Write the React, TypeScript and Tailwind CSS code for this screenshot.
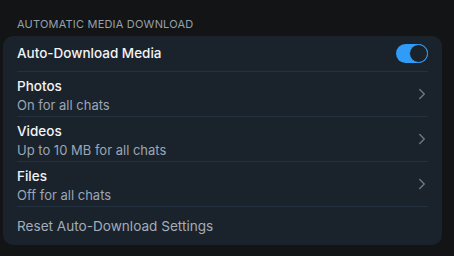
import { ChevronRight } from "lucide-react";

const rows = [
  { title: "Photos", sub: "On for all chats" },
  { title: "Videos", sub: "Up to 10 MB for all chats" },
  { title: "Files", sub: "Off for all chats" },
];

function Toggle() {
  return (
    <div className="w-[32px] h-[19px] rounded-full bg-[#2f9cf8] flex items-center justify-end">
      <div className="w-[19px] h-[19px] rounded-full bg-[#1a222c] border-[1.5px] border-[#2f9cf8]" />
    </div>
  );
}

export default function App() {
  return (
    <div
      className="w-[454px] h-[256px] bg-[#131416] pl-[3px] pr-[12px] pt-[17px]"
      style={{ fontFamily: "Inter, 'Liberation Sans', sans-serif" }}
    >
      <div className="pl-[14px] text-[11px] leading-[14px] text-[#96a0ab] tracking-[0.2px] mb-[5px]">
        AUTOMATIC MEDIA DOWNLOAD
      </div>
      <div className="bg-[#1a222c] rounded-[10px] pl-[14px] pr-[14px]">
        <div className="h-[36px] flex items-center justify-between border-b border-[#243140]">
          <span className="text-[13.5px] font-medium text-[#f2f4f6]">Auto-Download Media</span>
          <Toggle />
        </div>
        {rows.map((r) => (
          <div
            key={r.title}
            className="h-[45px] flex items-center justify-between border-b border-[#243140]"
          >
            <div className="flex flex-col pt-[3px]">
              <span className="text-[13.5px] leading-[18px] font-medium text-[#f2f4f6]">{r.title}</span>
              <span className="text-[13px] leading-[18px] mt-[1px] text-[#9aa7b5]">{r.sub}</span>
            </div>
            <ChevronRight size={18} strokeWidth={2} className="text-[#6b7683] -mr-[3px]" />
          </div>
        ))}
        <div className="h-[38px] flex items-center">
          <span className="text-[13.6px] text-[#a3adb8]">Reset Auto-Download Settings</span>
        </div>
      </div>
    </div>
  );
}
